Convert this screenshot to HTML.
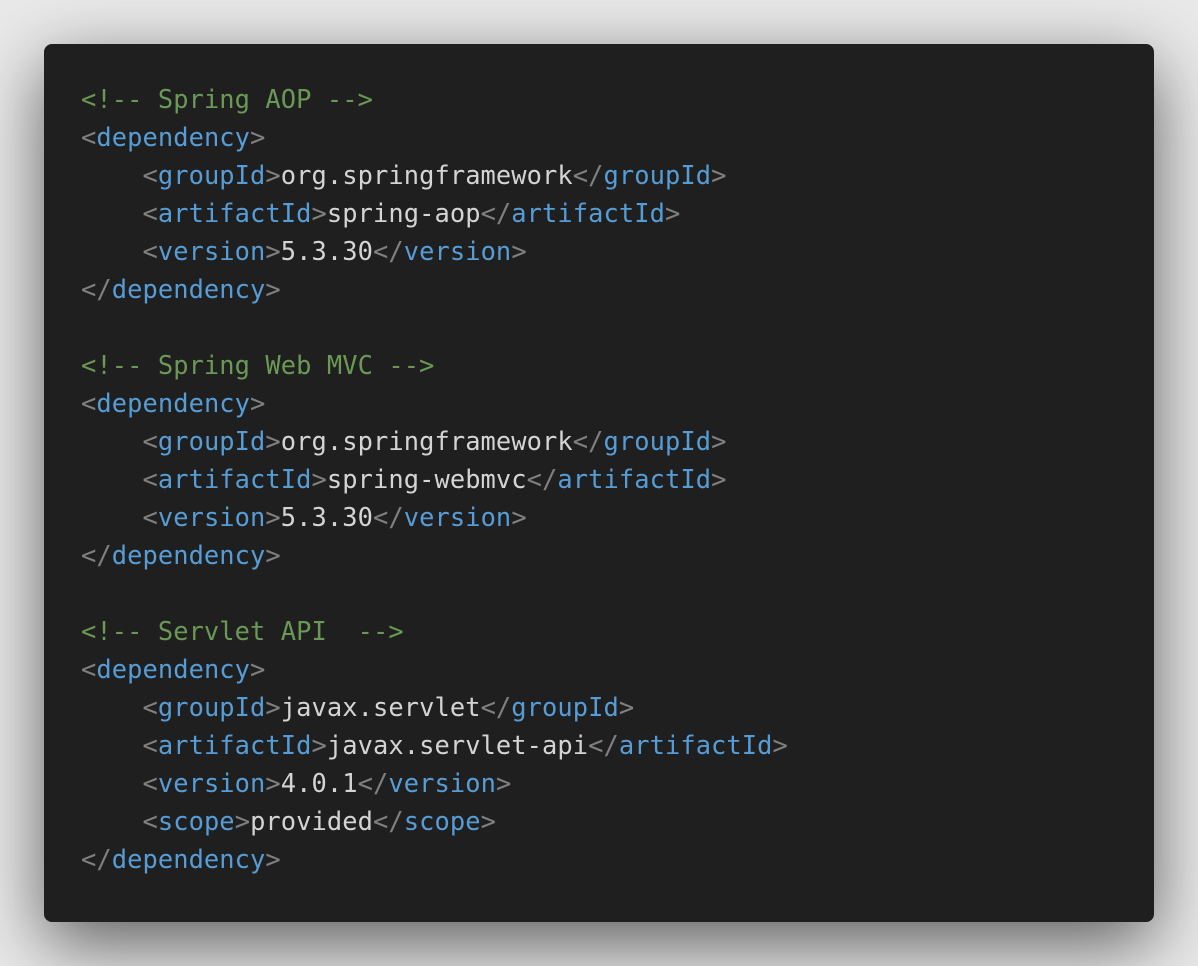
<!DOCTYPE html>
<html><head><style>
html,body{margin:0;padding:0;}
body{width:1198px;height:966px;background:#e9e9e9;position:relative;overflow:hidden;}
.card{position:absolute;left:44px;top:44px;width:1110px;height:878px;background:#1f1f1f;border-radius:8px;box-shadow:0 22px 72px rgba(0,0,0,0.6);}
pre{margin:0;position:absolute;left:81px;top:80px;font-family:"DejaVu Sans Mono","Liberation Mono",monospace;font-size:25.4px;line-height:38px;color:#d4d4d4;letter-spacing:0.08px;}
.c{color:#6a9955}.t{color:#569cd6}.b{color:#808080}
</style></head><body>
<div class="card"></div>
<pre><span class="c">&lt;!-- Spring AOP --&gt;</span>
<span class="b">&lt;</span><span class="t">dependency</span><span class="b">&gt;</span>
    <span class="b">&lt;</span><span class="t">groupId</span><span class="b">&gt;</span>org.springframework<span class="b">&lt;/</span><span class="t">groupId</span><span class="b">&gt;</span>
    <span class="b">&lt;</span><span class="t">artifactId</span><span class="b">&gt;</span>spring-aop<span class="b">&lt;/</span><span class="t">artifactId</span><span class="b">&gt;</span>
    <span class="b">&lt;</span><span class="t">version</span><span class="b">&gt;</span>5.3.30<span class="b">&lt;/</span><span class="t">version</span><span class="b">&gt;</span>
<span class="b">&lt;/</span><span class="t">dependency</span><span class="b">&gt;</span>

<span class="c">&lt;!-- Spring Web MVC --&gt;</span>
<span class="b">&lt;</span><span class="t">dependency</span><span class="b">&gt;</span>
    <span class="b">&lt;</span><span class="t">groupId</span><span class="b">&gt;</span>org.springframework<span class="b">&lt;/</span><span class="t">groupId</span><span class="b">&gt;</span>
    <span class="b">&lt;</span><span class="t">artifactId</span><span class="b">&gt;</span>spring-webmvc<span class="b">&lt;/</span><span class="t">artifactId</span><span class="b">&gt;</span>
    <span class="b">&lt;</span><span class="t">version</span><span class="b">&gt;</span>5.3.30<span class="b">&lt;/</span><span class="t">version</span><span class="b">&gt;</span>
<span class="b">&lt;/</span><span class="t">dependency</span><span class="b">&gt;</span>

<span class="c">&lt;!-- Servlet API  --&gt;</span>
<span class="b">&lt;</span><span class="t">dependency</span><span class="b">&gt;</span>
    <span class="b">&lt;</span><span class="t">groupId</span><span class="b">&gt;</span>javax.servlet<span class="b">&lt;/</span><span class="t">groupId</span><span class="b">&gt;</span>
    <span class="b">&lt;</span><span class="t">artifactId</span><span class="b">&gt;</span>javax.servlet-api<span class="b">&lt;/</span><span class="t">artifactId</span><span class="b">&gt;</span>
    <span class="b">&lt;</span><span class="t">version</span><span class="b">&gt;</span>4.0.1<span class="b">&lt;/</span><span class="t">version</span><span class="b">&gt;</span>
    <span class="b">&lt;</span><span class="t">scope</span><span class="b">&gt;</span>provided<span class="b">&lt;/</span><span class="t">scope</span><span class="b">&gt;</span>
<span class="b">&lt;/</span><span class="t">dependency</span><span class="b">&gt;</span></pre>
</body></html>
